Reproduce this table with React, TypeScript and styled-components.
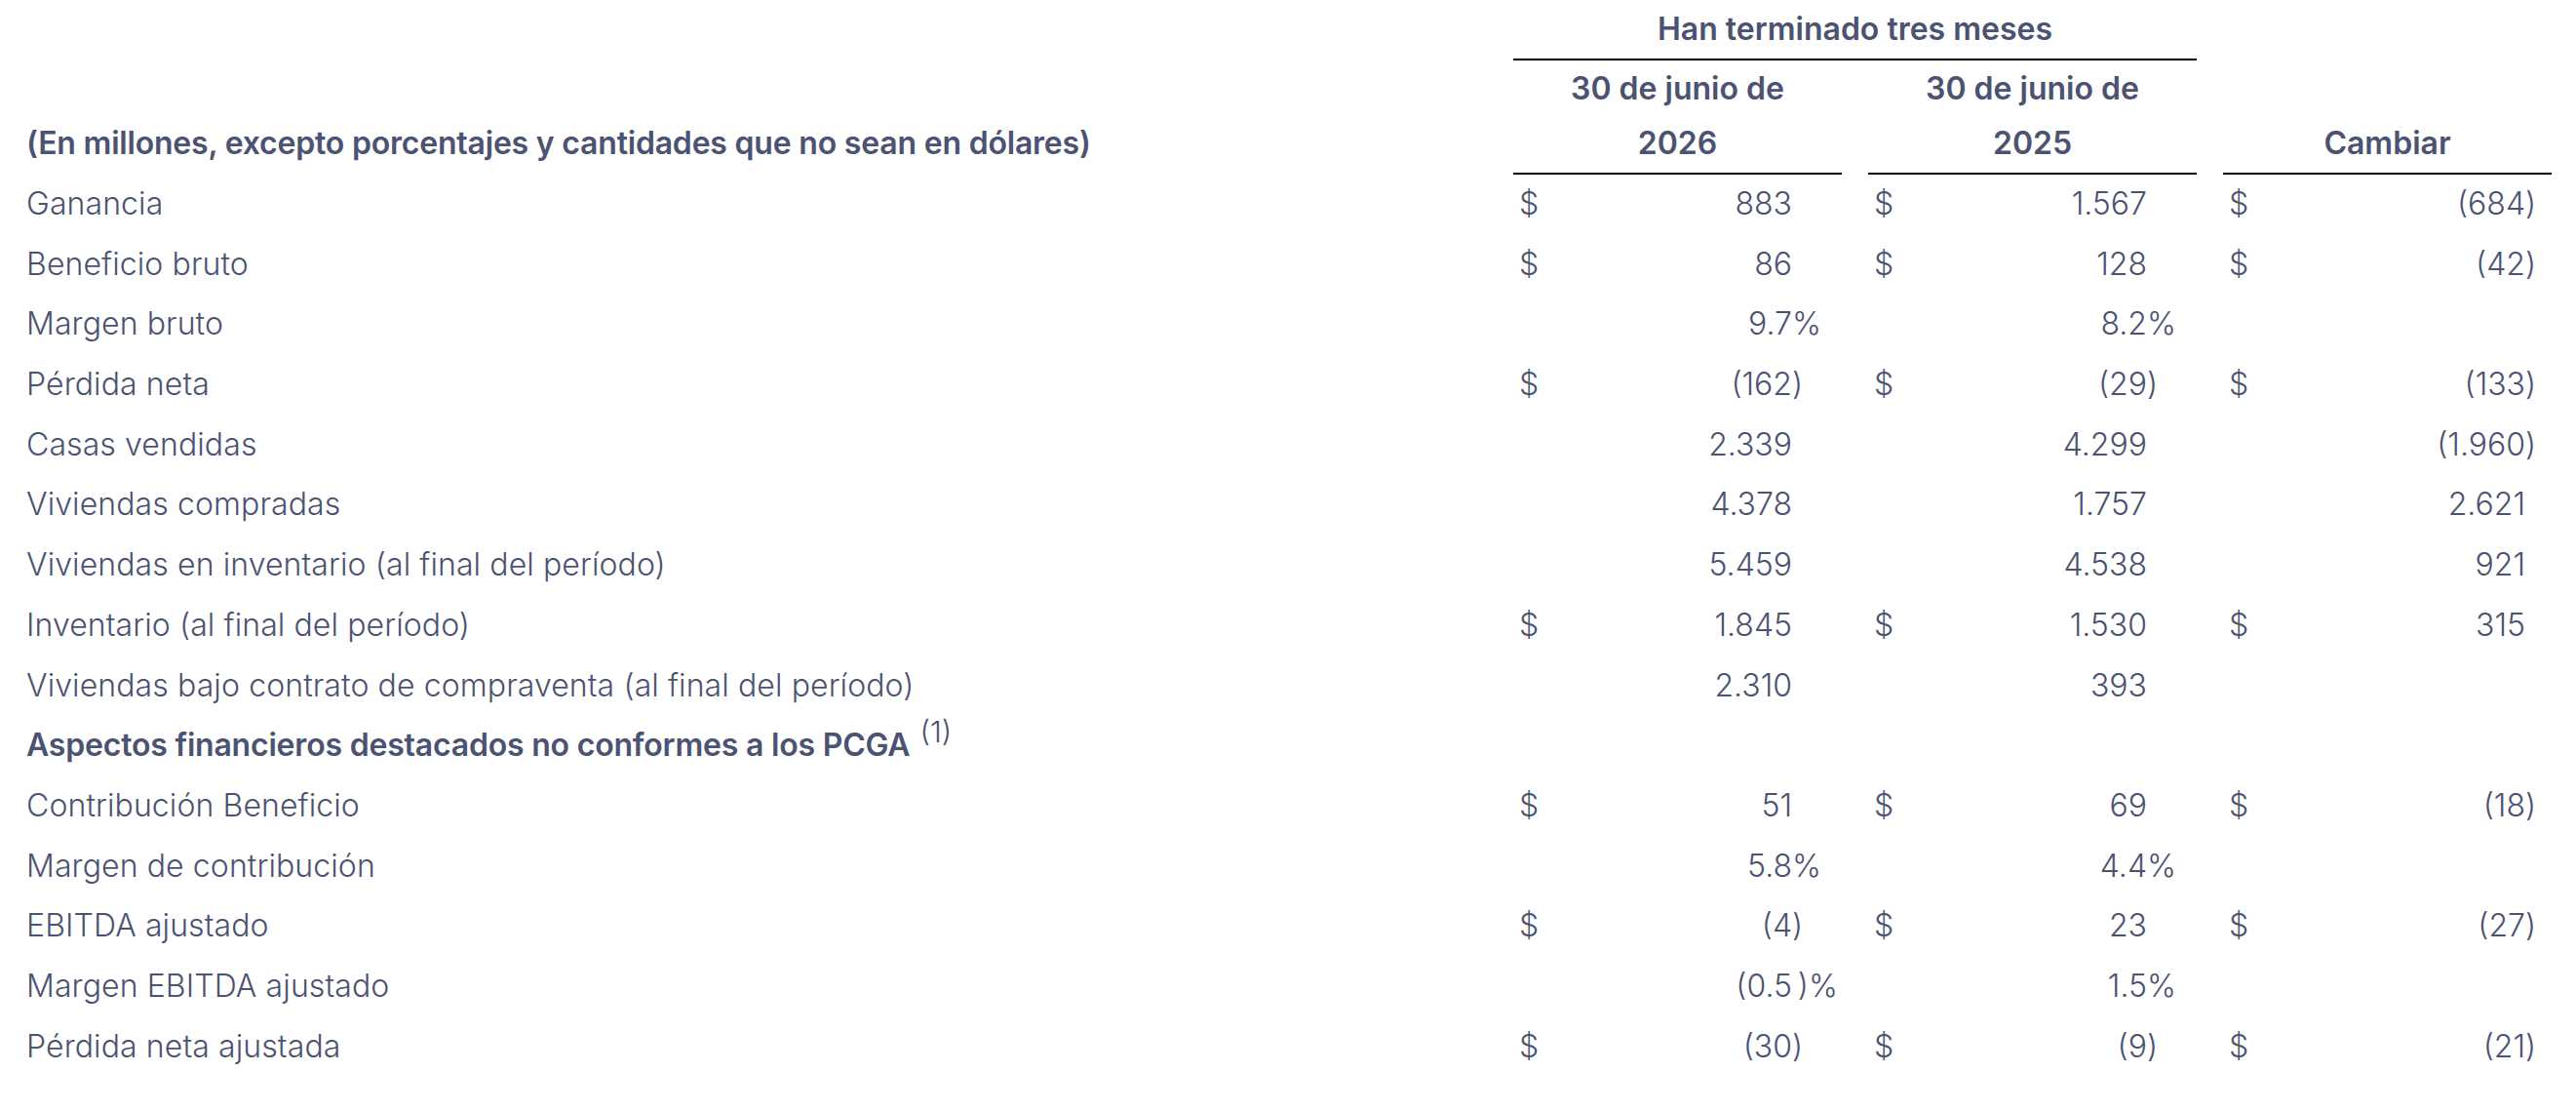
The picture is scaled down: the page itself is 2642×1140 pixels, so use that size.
import React from 'react';
import styled, { createGlobalStyle } from 'styled-components';

const GlobalStyle = createGlobalStyle`
  html, body {
    margin: 0;
    padding: 0;
    background: #ffffff;
  }
`;

interface Amount {
  dollar?: boolean;
  value: string;
  suffix?: string;
}

interface Row {
  label: string;
  cells?: (Amount | null)[];
  section?: boolean;
  note?: string;
}

const rows: Row[] = [
  {
    label: 'Ganancia',
    cells: [
      { dollar: true, value: '883' },
      { dollar: true, value: '1.567' },
      { dollar: true, value: '(684', suffix: ')' },
    ],
  },
  {
    label: 'Beneficio bruto',
    cells: [
      { dollar: true, value: '86' },
      { dollar: true, value: '128' },
      { dollar: true, value: '(42', suffix: ')' },
    ],
  },
  {
    label: 'Margen bruto',
    cells: [{ value: '9.7', suffix: '%' }, { value: '8.2', suffix: '%' }, null],
  },
  {
    label: 'Pérdida neta',
    cells: [
      { dollar: true, value: '(162', suffix: ')' },
      { dollar: true, value: '(29', suffix: ')' },
      { dollar: true, value: '(133', suffix: ')' },
    ],
  },
  {
    label: 'Casas vendidas',
    cells: [{ value: '2.339' }, { value: '4.299' }, { value: '(1.960', suffix: ')' }],
  },
  {
    label: 'Viviendas compradas',
    cells: [{ value: '4.378' }, { value: '1.757' }, { value: '2.621' }],
  },
  {
    label: 'Viviendas en inventario (al final del período)',
    cells: [{ value: '5.459' }, { value: '4.538' }, { value: '921' }],
  },
  {
    label: 'Inventario (al final del período)',
    cells: [
      { dollar: true, value: '1.845' },
      { dollar: true, value: '1.530' },
      { dollar: true, value: '315' },
    ],
  },
  {
    label: 'Viviendas bajo contrato de compraventa (al final del período)',
    cells: [{ value: '2.310' }, { value: '393' }, null],
  },
  {
    label: 'Aspectos financieros destacados no conformes a los PCGA',
    section: true,
    note: '(1)',
  },
  {
    label: 'Contribución Beneficio',
    cells: [
      { dollar: true, value: '51' },
      { dollar: true, value: '69' },
      { dollar: true, value: '(18', suffix: ')' },
    ],
  },
  {
    label: 'Margen de contribución',
    cells: [{ value: '5.8', suffix: '%' }, { value: '4.4', suffix: '%' }, null],
  },
  {
    label: 'EBITDA ajustado',
    cells: [
      { dollar: true, value: '(4', suffix: ')' },
      { dollar: true, value: '23' },
      { dollar: true, value: '(27', suffix: ')' },
    ],
  },
  {
    label: 'Margen EBITDA ajustado',
    cells: [{ value: '(0.5', suffix: '\u2009)%' }, { value: '1.5', suffix: '%' }, null],
  },
  {
    label: 'Pérdida neta ajustada',
    cells: [
      { dollar: true, value: '(30', suffix: ')' },
      { dollar: true, value: '(9', suffix: ')' },
      { dollar: true, value: '(21', suffix: ')' },
    ],
  },
];

const Table = styled.div`
  display: grid;
  grid-template-columns: 1fr 337px 337px 337px;
  column-gap: 27px;
  padding: 0 25px 0 27px;
  color: #4b5272;
  font-family: Inter, 'Noto Sans', 'Liberation Sans', sans-serif;
  font-size: 32px;
  font-weight: 300;
`;

const Blank = styled.div``;

const GroupHead = styled.div`
  grid-column: 2 / span 2;
  line-height: 60px;
  text-align: center;
  font-weight: 600;
  border-bottom: 2px solid #000;
`;

const ColHead = styled.div`
  align-self: end;
  padding: 1px 0 2px;
  line-height: 56px;
  text-align: center;
  font-weight: 600;
  border-bottom: 2px solid #000;
`;

const Caption = styled.div`
  align-self: end;
  padding-bottom: 4px;
  line-height: 56px;
  font-weight: 600;
  letter-spacing: -0.2px;
  white-space: nowrap;
`;

const Label = styled.div<{ $section?: boolean }>`
  grid-column: ${(p) => (p.$section ? '1 / -1' : 'auto')};
  height: 61.7px;
  line-height: 59px;
  white-space: nowrap;
  letter-spacing: ${(p) => (p.$section ? '-0.2px' : '0.1px')};
  font-weight: ${(p) => (p.$section ? 600 : 300)};
`;

const Note = styled.sup`
  font-size: 30px;
  font-weight: 300;
  letter-spacing: 0;
  margin-left: 10px;
  vertical-align: 14px;
  line-height: 0;
`;

const Value = styled.div<{ $tail: number }>`
  display: grid;
  grid-template-columns: auto 1fr ${(p) => p.$tail}px;
  height: 61.7px;
  line-height: 59px;
  padding-left: 6px;
  white-space: nowrap;
`;

const Dollar = styled.span``;

const Number = styled.span`
  text-align: right;
`;

const Tail = styled.span`
  text-align: left;
`;

function AmountCell({ amount, tail }: { amount: Amount | null; tail: number }): React.ReactElement {
  return (
    <Value $tail={tail}>
      <Dollar>{amount?.dollar ? '$' : ''}</Dollar>
      <Number>{amount?.value ?? ''}</Number>
      <Tail>{amount?.suffix ?? ''}</Tail>
    </Value>
  );
}

export default function App(): React.ReactElement {
  return (
    <>
      <GlobalStyle />
      <Table>
        <Blank />
        <GroupHead>Han terminado tres meses</GroupHead>
        <Blank />

        <Caption>(En millones, excepto porcentajes y cantidades que no sean en dólares)</Caption>
        <ColHead>
          30 de junio de
          <br />
          2026
        </ColHead>
        <ColHead>
          30 de junio de
          <br />
          2025
        </ColHead>
        <ColHead>Cambiar</ColHead>

        {rows.map((row) =>
          row.section ? (
            <Label key={row.label} $section>
              {row.label}
              {row.note && <Note>{row.note}</Note>}
            </Label>
          ) : (
            <React.Fragment key={row.label}>
              <Label>{row.label}</Label>
              {(row.cells ?? []).map((c, i) => (
                <AmountCell key={i} amount={c} tail={i === 2 ? 27 : 51} />
              ))}
            </React.Fragment>
          )
        )}
      </Table>
    </>
  );
}
